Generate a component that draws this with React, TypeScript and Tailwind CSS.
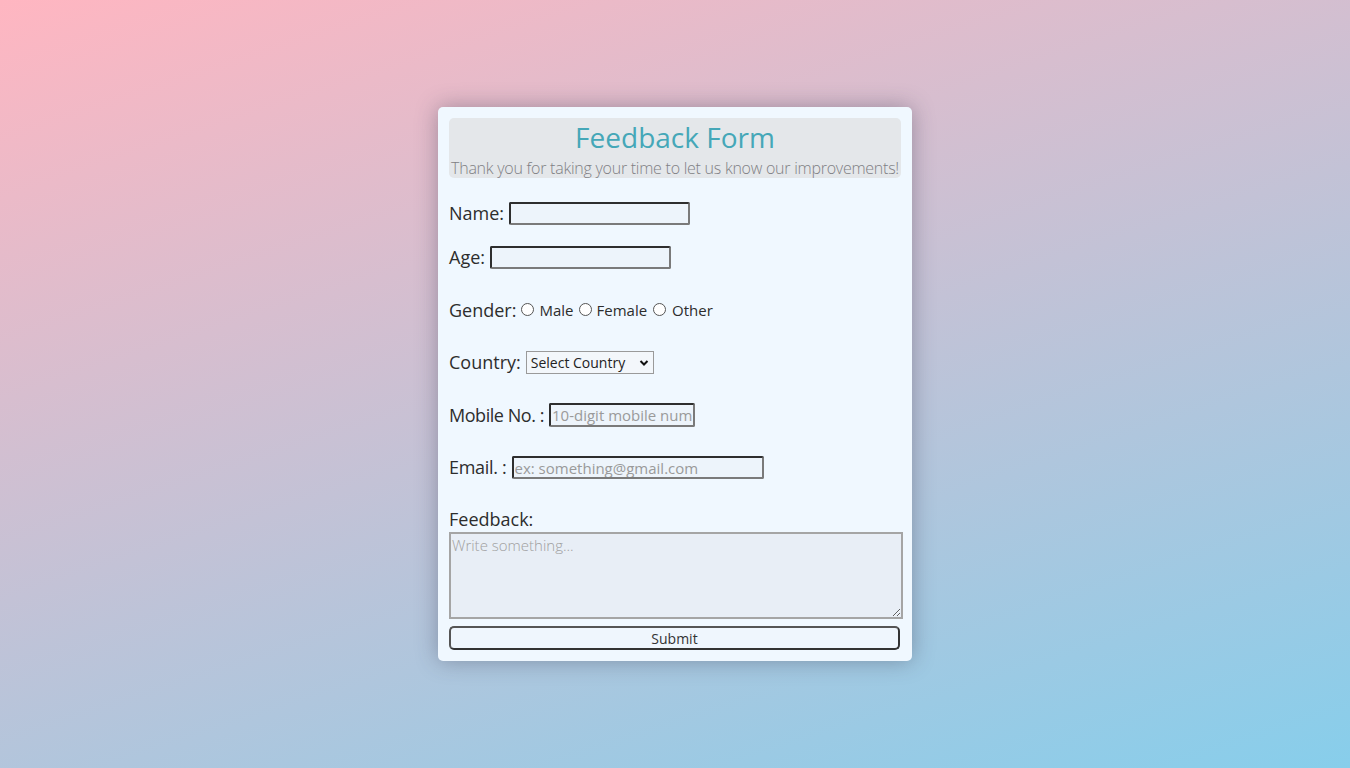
import React from "react";

const font = { fontFamily: '"Open Sans", "Noto Sans", sans-serif' };

export default function App() {
  const inputCls =
    "h-[23px] bg-[#edf4fb] border-2 border-t-[#2e2e2e] border-l-[#2e2e2e] border-b-[#7a7a7a] border-r-[#7a7a7a] rounded-[2px] px-[1px] text-[15px] text-[#333] placeholder:text-[#9a9a9a] outline-none";
  return (
    <div
      className="w-[1350px] h-[768px] bg-[linear-gradient(162deg,#ffb6c1,#87ceeb)] flex justify-center items-start pt-[107px]"
      style={font}
    >
      <div className="w-[474px] bg-[#f0f8ff] rounded-[5px] shadow-[0_0_22px_rgba(60,60,80,0.4)] px-[11px] pt-[11px] pb-[11px] flex flex-col text-[#2d2d2d]">
        <div className="h-[60px] bg-[#e4e7ea] rounded-[5px] flex flex-col items-center">
          <div className="text-[28px] leading-[39px] text-[#45a7b8]">Feedback Form</div>
          <div className="mt-[2px] text-[16px] leading-[19px] font-light text-[#808084] tracking-[-0.25px] whitespace-nowrap">
            Thank you for taking your time to let us know our improvements!
          </div>
        </div>

        <div className="mt-[24px] h-[23px] flex items-center">
          <span className="text-[18px]">Name:</span>
          <input className={inputCls + " ml-[5px] w-[181px]"} />
        </div>

        <div className="mt-[21px] h-[23px] flex items-center">
          <span className="text-[18px]">Age:</span>
          <input className={inputCls + " ml-[5px] w-[181px]"} />
        </div>

        <div className="mt-[30px] h-[23px] flex items-center">
          <span className="text-[18px]">Gender:</span>
          <span className="ml-[5px] w-[13px] h-[13px] rounded-full border border-[#555] bg-white -mt-[3px]"></span>
          <span className="ml-[5px] text-[15px]">Male</span>
          <span className="ml-[5px] w-[13px] h-[13px] rounded-full border border-[#555] bg-white -mt-[3px]"></span>
          <span className="ml-[5px] text-[15px]">Female</span>
          <span className="ml-[6px] w-[13px] h-[13px] rounded-full border border-[#555] bg-white -mt-[3px]"></span>
          <span className="ml-[6px] text-[15px]">Other</span>
        </div>

        <div className="mt-[29px] h-[23px] flex items-center">
          <span className="text-[18px]">Country:</span>
          <div className="ml-[5px] w-[128px] h-[23px] border border-[#9a9a9a] bg-[#f3f7fb] flex items-center pl-[4px] pr-[4px] justify-between">
            <span className="text-[14px] text-[#222]">Select Country</span>
            <svg width="10" height="8" viewBox="0 0 10 8">
              <path d="M1.5 2 L5 5.5 L8.5 2" fill="none" stroke="#111" strokeWidth="2" />
            </svg>
          </div>
        </div>

        <div className="mt-[29px] h-[24px] flex items-center">
          <span className="text-[18px] tracking-[-0.45px]">Mobile No. :</span>
          <input
            className={inputCls + " ml-[5px] w-[146px] h-[24px]"}
            placeholder="10-digit mobile number"
          />
        </div>

        <div className="mt-[29px] h-[23px] flex items-center">
          <span className="text-[18px] tracking-[-0.3px]">Email. :</span>
          <input
            className={inputCls + " ml-[5px] w-[252px]"}
            placeholder="ex: something@gmail.com"
          />
        </div>

        <div className="mt-[29px] h-[23px] flex items-center">
          <span className="text-[18px]">Feedback:</span>
        </div>

        <textarea
          className="mt-[1px] w-[454px] h-[87px] bg-[#e8eef6] border-2 border-[#a5a5a5] text-[15px] font-light px-[1px] py-0 placeholder:text-[#a0a0a0] outline-none"
          placeholder="Write something..."
        />

        <button className="mt-[7px] w-[451px] h-[24px] bg-[#eff6fd] border-2 border-[#333] border-t-[#555] border-l-[#555] rounded-[5px] text-[14px] text-[#333] flex items-center justify-center">
          Submit
        </button>
      </div>
    </div>
  );
}
